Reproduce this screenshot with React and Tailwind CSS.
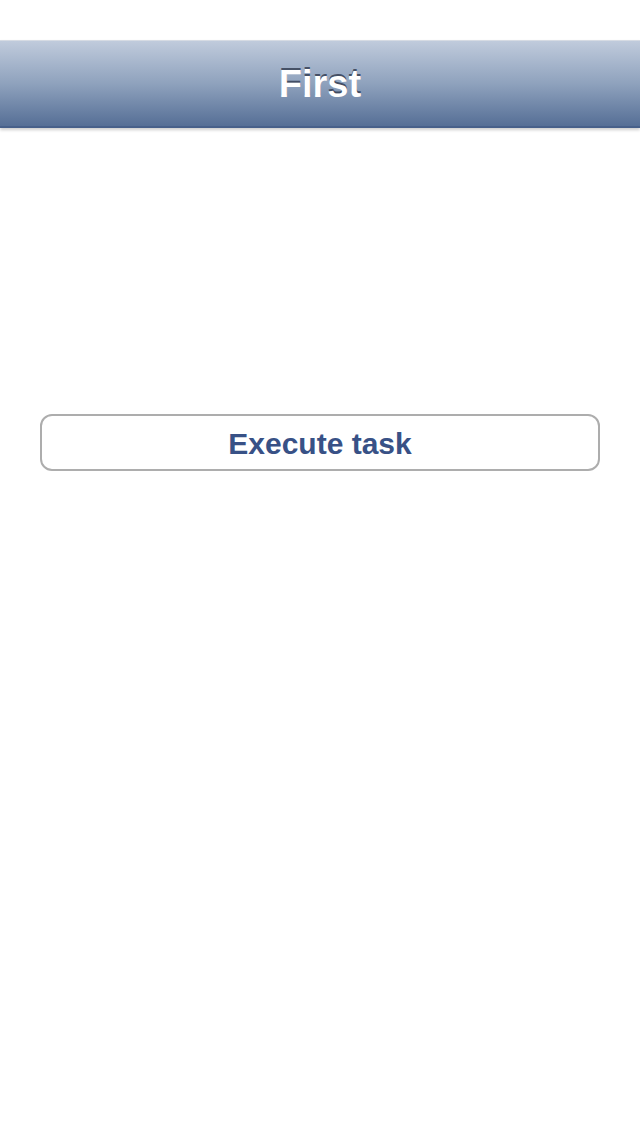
export default function App() {
  return (
    <div className="min-h-[1136px] bg-white flex flex-col" style={{ fontFamily: '"Liberation Sans", Arial, sans-serif' }}>
      {/* status bar area */}
      <div className="h-10 bg-white" />

      {/* nav bar */}
      <div className="relative h-[88px] border-t border-[#d6dbe3] border-b-2 border-b-[#47608a] bg-gradient-to-b from-[#c0cbdc] via-[#8fa2bd] to-[#566f96] flex items-center justify-center shadow-[0_2px_3px_rgba(0,0,0,0.2)]">
        <h1 className="text-[38px] font-bold text-white leading-none [text-shadow:0_-2px_0_rgba(40,50,70,0.75)]">First</h1>
      </div>

      {/* content */}
      <div className="px-10 pt-[286px]">
        <button className="w-full h-[57px] pt-[2px] rounded-xl border-2 border-[#adadad] bg-white text-[30px] font-bold text-[#385186]">
          Execute task
        </button>
      </div>
    </div>
  );
}
